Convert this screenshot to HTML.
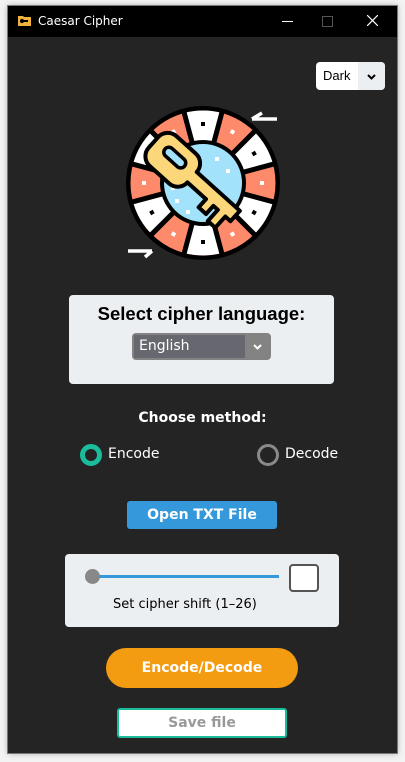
<!DOCTYPE html>
<html><head><meta charset="utf-8"><style>
body{margin:0;width:405px;height:762px;background:#f3f3f3;position:relative;overflow:hidden;font-family:"Liberation Sans","DejaVu Sans",sans-serif}
.win{position:absolute;left:8px;top:6px;width:389px;height:747px;background:#242424;box-shadow:0 0 6px rgba(0,0,0,.35);outline:1px solid #777}
.tb{position:absolute;left:0;top:0;right:0;height:31px;background:#000;color:#fff;font-size:12px;font-family:"DejaVu Sans",sans-serif}
.abs{position:absolute}
.panel{position:absolute;background:#eceff1;border-radius:4px}
</style></head><body>
<div class="win">
 <div class="tb">
  <svg class="abs" style="left:10px;top:9px" width="13" height="11"><path d="M0 1h5l1 1h7v9H0z" fill="#f2b33d"/><rect x="3" y="5" width="7" height="2" fill="#000"/><circle cx="4" cy="6" r="1.6" fill="none" stroke="#000"/></svg>
  <div class="abs" style="left:30px;top:8px">Caesar Cipher</div>
  <div class="abs" style="left:274px;top:15px;width:11px;height:1px;background:#fff"></div>
  <div class="abs" style="left:314px;top:10px;width:9px;height:9px;border:1px solid #555"></div>
  <svg class="abs" style="left:359px;top:9px" width="11" height="11"><path d="M0 0L11 11M11 0L0 11" stroke="#fff" stroke-width="1.2"/></svg>
 </div>
 <div class="abs" style="left:308px;top:56px;width:69px;height:28px;background:#fff;border-radius:4px;overflow:hidden">
  <div class="abs" style="left:7px;top:6px;font-size:13px;color:#000">Dark</div>
  <div class="abs" style="left:42px;top:0;width:27px;height:28px;background:#eceff1"></div>
  <svg class="abs" style="left:51px;top:12px" width="9" height="6"><path d="M1 1l3.5 3.5L8 1" stroke="#000" stroke-width="2" fill="none"/></svg>
 </div>
 <svg class="abs" style="left:0;top:0" width="389" height="260">
  <g transform="translate(-8,-6)">
   <circle cx="203" cy="183" r="77" fill="#000"/>
   <circle cx="203" cy="183" r="56" fill="none" stroke="#fe8a6c" stroke-width="33"/>
   <circle cx="203" cy="183" r="56" fill="none" stroke="#fff" stroke-width="33" stroke-dasharray="29.32 29.32" stroke-dashoffset="-14.66"/>
   <g stroke="#000" stroke-width="5">
    <line x1="203" y1="109" x2="203" y2="146" transform="rotate(15 203 183)"/>
    <line x1="203" y1="109" x2="203" y2="146" transform="rotate(45 203 183)"/>
    <line x1="203" y1="109" x2="203" y2="146" transform="rotate(75 203 183)"/>
    <line x1="203" y1="109" x2="203" y2="146" transform="rotate(105 203 183)"/>
    <line x1="203" y1="109" x2="203" y2="146" transform="rotate(135 203 183)"/>
    <line x1="203" y1="109" x2="203" y2="146" transform="rotate(165 203 183)"/>
    <line x1="203" y1="109" x2="203" y2="146" transform="rotate(195 203 183)"/>
    <line x1="203" y1="109" x2="203" y2="146" transform="rotate(225 203 183)"/>
    <line x1="203" y1="109" x2="203" y2="146" transform="rotate(255 203 183)"/>
    <line x1="203" y1="109" x2="203" y2="146" transform="rotate(285 203 183)"/>
    <line x1="203" y1="109" x2="203" y2="146" transform="rotate(315 203 183)"/>
    <line x1="203" y1="109" x2="203" y2="146" transform="rotate(345 203 183)"/>
   </g>
   <g>
    <rect x="201" y="122" width="4" height="4" fill="#000"/>
    <rect x="201" y="122" width="4" height="4" fill="#fff" transform="rotate(30 203 183)"/>
    <rect x="201" y="122" width="4" height="4" fill="#000" transform="rotate(60 203 183)"/>
    <rect x="201" y="122" width="4" height="4" fill="#fff" transform="rotate(90 203 183)"/>
    <rect x="201" y="122" width="4" height="4" fill="#000" transform="rotate(120 203 183)"/>
    <rect x="201" y="122" width="4" height="4" fill="#fff" transform="rotate(150 203 183)"/>
    <rect x="201" y="122" width="4" height="4" fill="#000" transform="rotate(180 203 183)"/>
    <rect x="201" y="122" width="4" height="4" fill="#fff" transform="rotate(210 203 183)"/>
    <rect x="201" y="122" width="4" height="4" fill="#000" transform="rotate(240 203 183)"/>
    <rect x="201" y="122" width="4" height="4" fill="#fff" transform="rotate(270 203 183)"/>
    <rect x="201" y="122" width="4" height="4" fill="#000" transform="rotate(300 203 183)"/>
    <rect x="201" y="122" width="4" height="4" fill="#fff" transform="rotate(330 203 183)"/>
   </g>
   <circle cx="203" cy="183" r="41" fill="#a3e2fb" stroke="#000" stroke-width="4"/>
   <g fill="#fff"><rect x="215" y="157" width="4" height="4"/><rect x="226" y="169" width="4" height="4"/><rect x="171" y="186" width="4" height="4"/><rect x="175" y="199" width="4" height="4"/><rect x="186" y="210" width="4" height="4"/></g>
   <g transform="rotate(42 203 183)">
    <path d="M152 166h26a13 13 0 0 1 13 13v0h58v14h-7v15h-10v-15h-6v11h-10v-11h-25v0a13 13 0 0 1-13 13h-26a13 13 0 0 1-13-13v-14a13 13 0 0 1 13-13z" fill="#fbd779" stroke="#000" stroke-width="4" stroke-linejoin="round"/>
    <rect x="152" y="178" width="26" height="10" rx="5" fill="#a3e2fb" stroke="#000" stroke-width="3.5"/>
   </g>
   <path d="M252 119l10-6M252 119h25" stroke="#fff" stroke-width="3.5" fill="none"/>
   <path d="M128 251h24M152 251l-7 6" stroke="#fff" stroke-width="3.5" fill="none"/>
  </g>
 </svg>
 <div class="panel" style="left:61px;top:289px;width:265px;height:89px"></div>
 <div class="abs" style="left:61px;top:297px;width:265px;text-align:center;font-size:18.5px;font-weight:bold;color:#000">Select cipher language:</div>
 <div class="abs" style="left:124px;top:327px;width:139px;height:27px;background:#838383;border-radius:4px;overflow:hidden">
  <div class="abs" style="left:2px;top:2px;width:111px;height:23px;background:#676770"></div>
  <div class="abs" style="left:7px;top:5px;font-size:14px;color:#fff;font-family:'DejaVu Sans',sans-serif">English</div>
  <svg class="abs" style="left:121px;top:11px" width="9" height="6"><path d="M1 1l3.5 3.5L8 1" stroke="#fff" stroke-width="2" fill="none"/></svg>
 </div>
 <div class="abs" style="left:0;top:404px;width:389px;text-align:center;font-size:14px;font-weight:bold;color:#fff;font-family:'DejaVu Sans',sans-serif">Choose method:</div>
 <div class="abs" style="left:72px;top:438px;width:12px;height:12px;border:5px solid #1abc9c;border-radius:50%;background:#242424"></div>
 <div class="abs" style="left:100px;top:440px;font-size:14px;color:#fff;font-family:'DejaVu Sans',sans-serif">Encode</div>
 <div class="abs" style="left:249px;top:438px;width:16px;height:16px;border:3px solid #8a8a8a;border-radius:50%"></div>
 <div class="abs" style="left:277px;top:440px;font-size:14px;color:#fff;font-family:'DejaVu Sans',sans-serif">Decode</div>
 <div class="abs" style="left:119px;top:495px;width:150px;height:28px;background:#3498db;border-radius:3px;color:#fff;font-weight:bold;font-size:14px;text-align:center;line-height:28px;font-family:'DejaVu Sans',sans-serif">Open TXT File</div>
 <div class="panel" style="left:57px;top:548px;width:274px;height:73px"></div>
 <div class="abs" style="left:84px;top:569px;width:187px;height:3px;background:#3498db"></div>
 <div class="abs" style="left:77px;top:563px;width:15px;height:15px;border-radius:50%;background:#888"></div>
 <div class="abs" style="left:281px;top:558px;width:26px;height:24px;background:#fff;border:2px solid #555;border-radius:4px"></div>
 <div class="abs" style="left:105px;top:591px;font-size:13px;color:#000;font-family:'DejaVu Sans',sans-serif">Set cipher shift (1–26)</div>
 <div class="abs" style="left:98px;top:642px;width:192px;height:40px;background:#f39c12;border-radius:20px;color:#fff;font-weight:bold;font-size:14px;text-align:center;line-height:40px;font-family:'DejaVu Sans',sans-serif">Encode/Decode</div>
 <div class="abs" style="left:109px;top:702px;width:166px;height:26px;background:#fff;border:2px solid #1abc9c;border-radius:3px;color:#999;font-weight:bold;font-size:14px;text-align:center;line-height:26px;font-family:'DejaVu Sans',sans-serif">Save file</div>
</div>
</body></html>
